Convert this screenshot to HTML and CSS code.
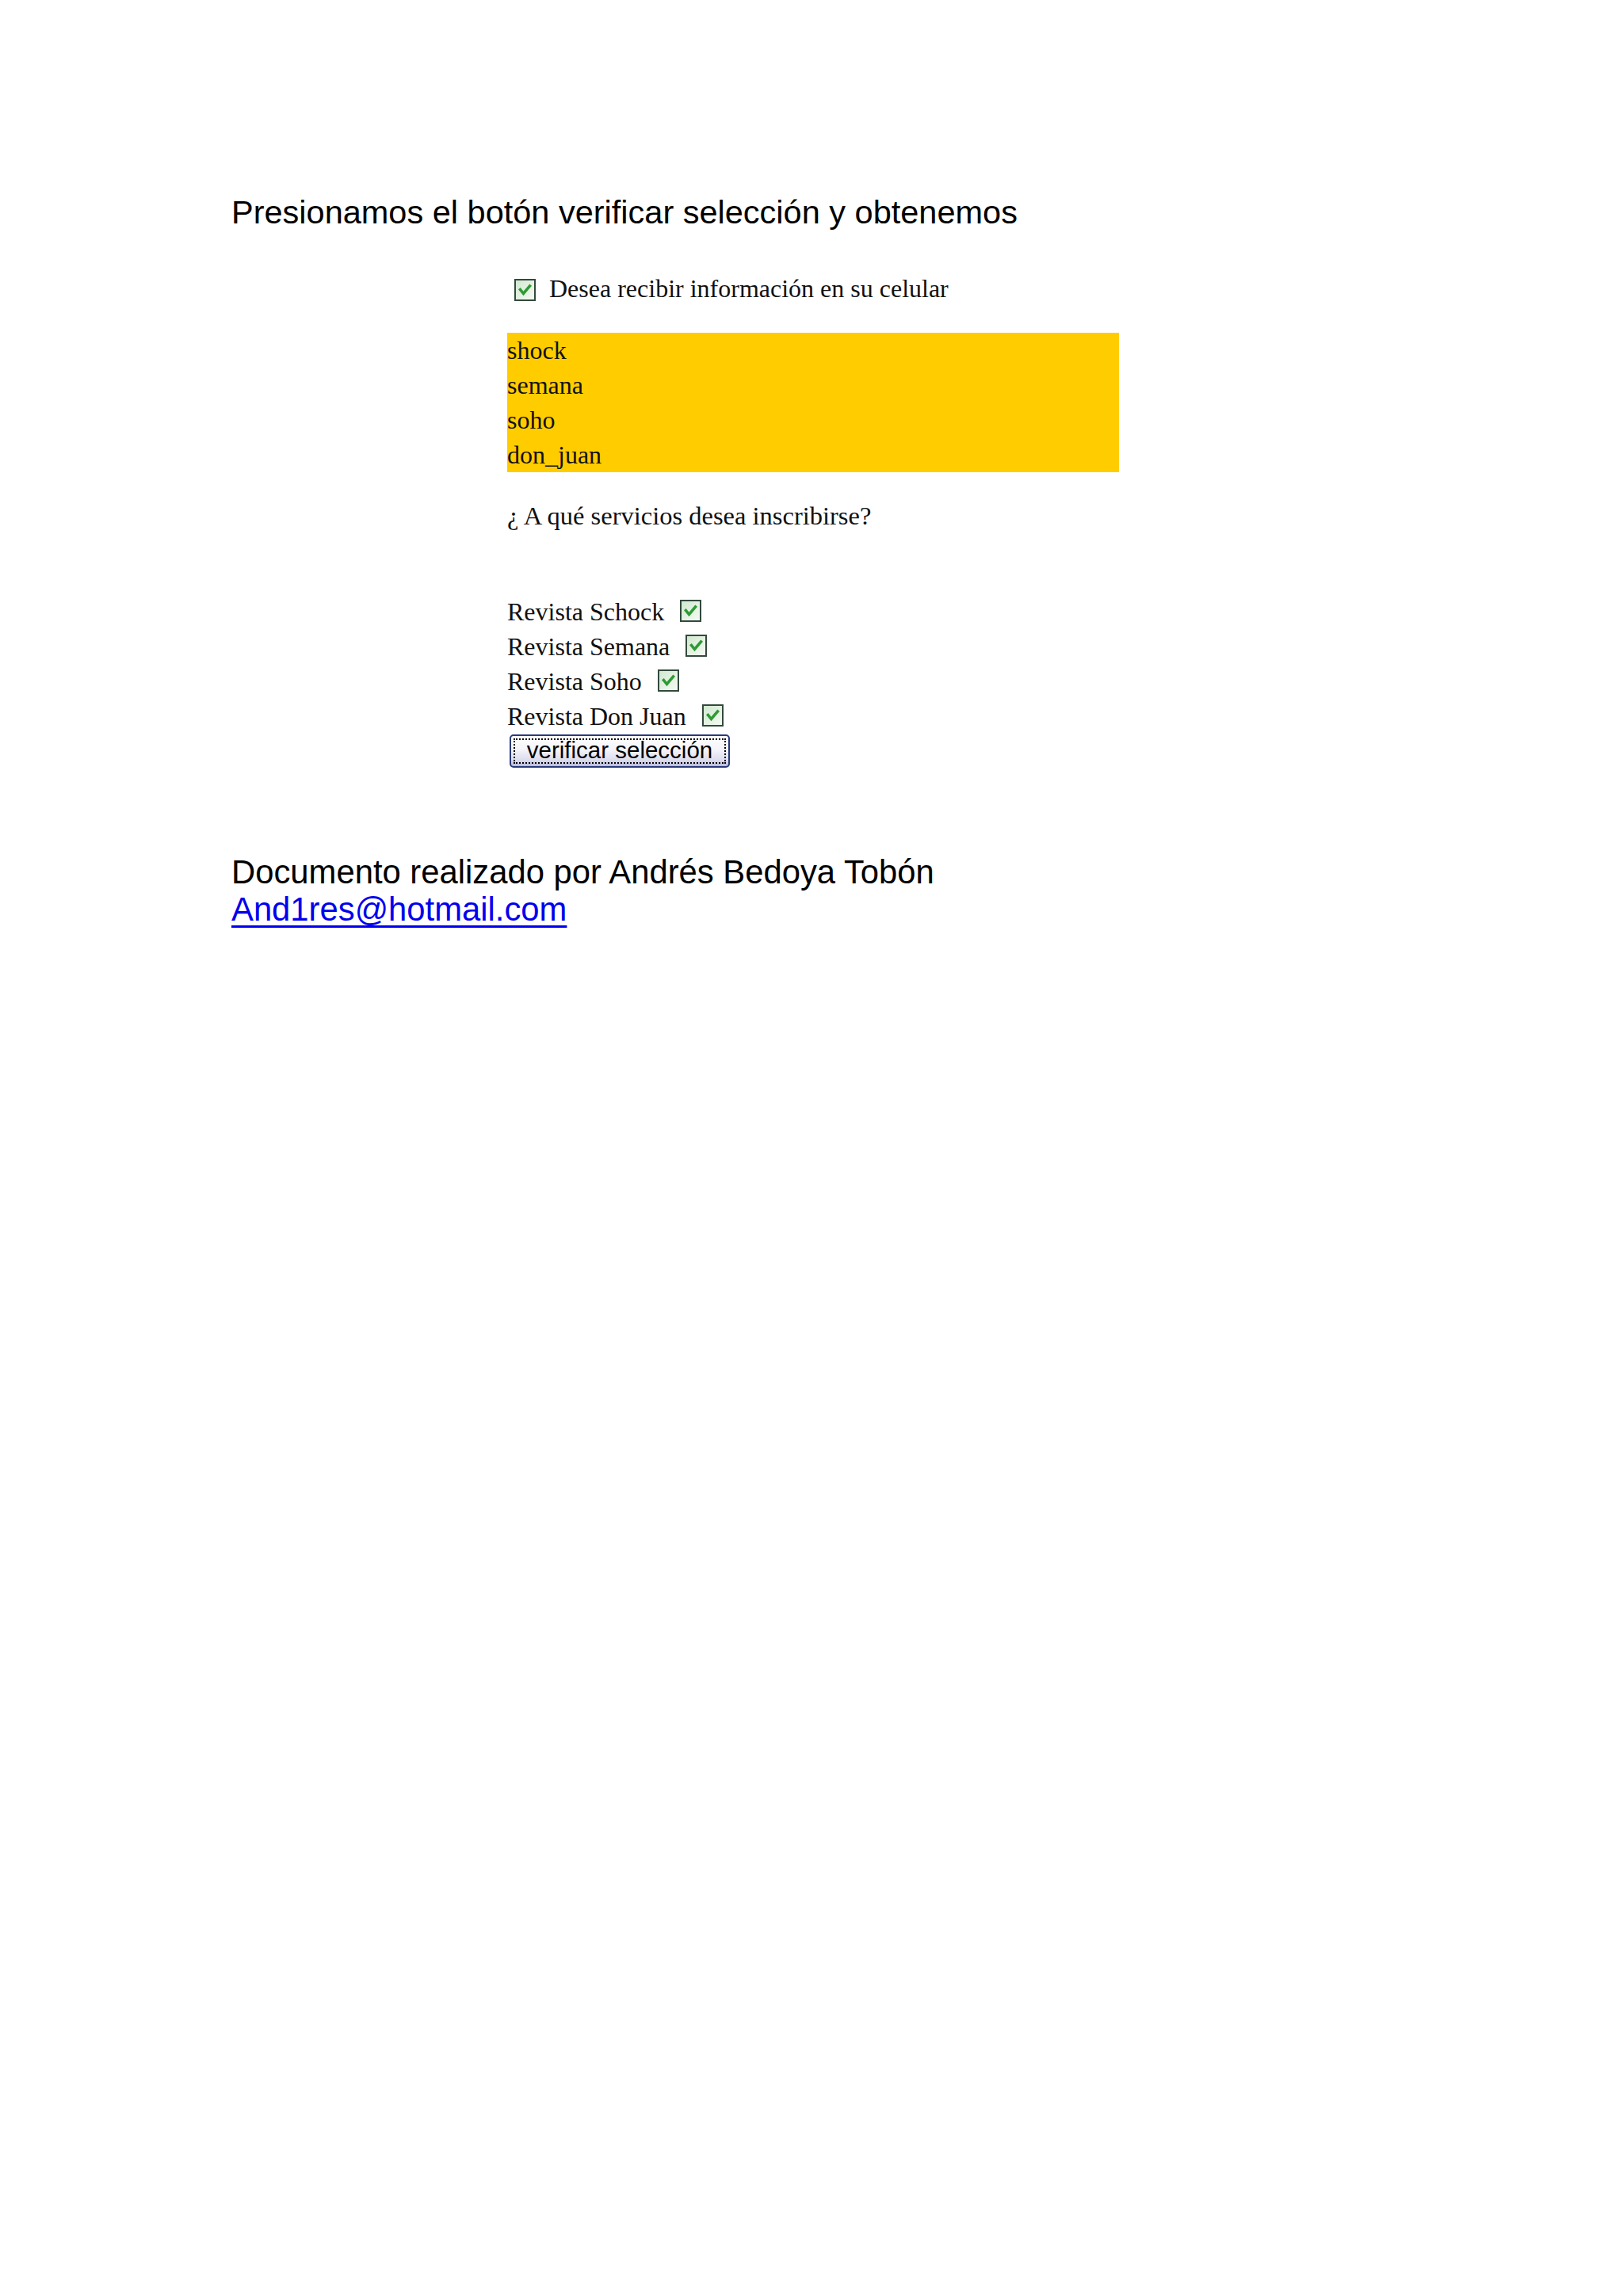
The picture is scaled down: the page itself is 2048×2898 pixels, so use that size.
FILE: index.html
```html
<!DOCTYPE html>
<html lang="es">
<head>
<meta charset="utf-8">
<title>Verificar selección</title>
<link rel="stylesheet" href="styles.css">
</head>
<body>
<svg class="defs" width="0" height="0" aria-hidden="true">
  <defs>
    <linearGradient id="cbfill" x1="0" y1="0" x2="1" y2="1">
      <stop offset="0" stop-color="#cfe8cf"/>
      <stop offset="1" stop-color="#f6fbf4"/>
    </linearGradient>
    <symbol id="cb" viewBox="0 0 27 28">
      <rect x="1" y="1" width="25" height="26" fill="url(#cbfill)" stroke="#33493d" stroke-width="2"/>
      <path d="M7.5 13.5 L11.5 18.5 L19.5 9" fill="none" stroke="#2f9a34" stroke-width="3.6" stroke-linecap="square"/>
    </symbol>
  </defs>
</svg>
<main class="page">
  <p class="title">Presionamos el botón verificar selección y obtenemos</p>

  <section class="shot">
    <div class="cell-row">
      <svg class="cb" viewBox="0 0 27 28"><use href="#cb"/></svg>
      <span>Desea recibir información en su celular</span>
    </div>

    <div class="band">
      <div>shock</div>
      <div>semana</div>
      <div>soho</div>
      <div>don_juan</div>
    </div>

    <p class="question">¿ A qué servicios desea inscribirse?</p>

    <ul class="mags">
      <li><span>Revista Schock</span><svg class="cb" viewBox="0 0 27 28"><use href="#cb"/></svg></li>
      <li><span>Revista Semana</span><svg class="cb" viewBox="0 0 27 28"><use href="#cb"/></svg></li>
      <li><span>Revista Soho</span><svg class="cb" viewBox="0 0 27 28"><use href="#cb"/></svg></li>
      <li><span>Revista Don Juan</span><svg class="cb" viewBox="0 0 27 28"><use href="#cb"/></svg></li>
    </ul>

    <div class="btn"><span class="focus">verificar selección</span></div>
  </section>

  <footer class="foot">
    <p>Documento realizado por Andrés Bedoya Tobón</p>
    <a href="mailto:And1res@hotmail.com">And1res@hotmail.com</a>
  </footer>
</main>
</body>
</html>
```

FILE: styles.css
```css
html, body {
  margin: 0;
  padding: 0;
  background: #ffffff;
}

.defs {
  position: absolute;
  width: 0;
  height: 0;
  overflow: hidden;
}

.page {
  padding: 244px 0 0 292px;
  font-family: "Liberation Sans", Arial, sans-serif;
  color: #000;
}

.title {
  margin: 0;
  font-size: 41.5px;
  line-height: 47px;
}

.shot {
  margin: 51px 0 0 348px;
  width: 772px;
  font-family: "Liberation Serif", "Times New Roman", serif;
  font-size: 32px;
  line-height: 44px;
  color: #111;
}

.cell-row {
  display: flex;
  align-items: center;
  gap: 17px;
  height: 44px;
  padding-left: 9px;
}

.cb {
  width: 27px;
  height: 28px;
  flex: none;
  display: block;
}

.cell-row .cb {
  margin-top: 4px;
}

.band {
  margin-top: 34px;
  background: #ffcc00;
  height: 176px;
}

.question {
  margin: 33px 0 0;
  font-size: 32.5px;
}

.mags {
  list-style: none;
  margin: 77px 0 0;
  padding: 0;
}

.mags li {
  display: flex;
  align-items: center;
  gap: 20px;
  height: 44px;
}

.mags li .cb {
  margin-top: -2px;
}

.btn {
  margin: 1px 0 0 3px;
  width: 278px;
  height: 42px;
  box-sizing: border-box;
  border: 2px solid #2a3a7a;
  border-radius: 5px;
  background: linear-gradient(to bottom, #ffffff 0%, #f4f4fa 45%, #dcdcee 80%, #b9bbdc 100%);
  display: flex;
  align-items: center;
  justify-content: center;
  padding: 3px;
  font-family: "Liberation Sans", Arial, sans-serif;
  font-size: 29.5px;
  line-height: 30px;
  color: #000;
}

.focus {
  flex: 1;
  align-self: stretch;
  display: flex;
  align-items: center;
  justify-content: center;
  border: 2px dotted #000;
  padding-bottom: 2px;
}

.foot {
  margin-top: 108px;
  font-size: 41.8px;
  line-height: 47px;
}

.foot p {
  margin: 0;
}

.foot a {
  color: #0000ee;
  text-decoration: underline;
  text-decoration-thickness: 3px;
  text-underline-offset: 6px;
}
```
